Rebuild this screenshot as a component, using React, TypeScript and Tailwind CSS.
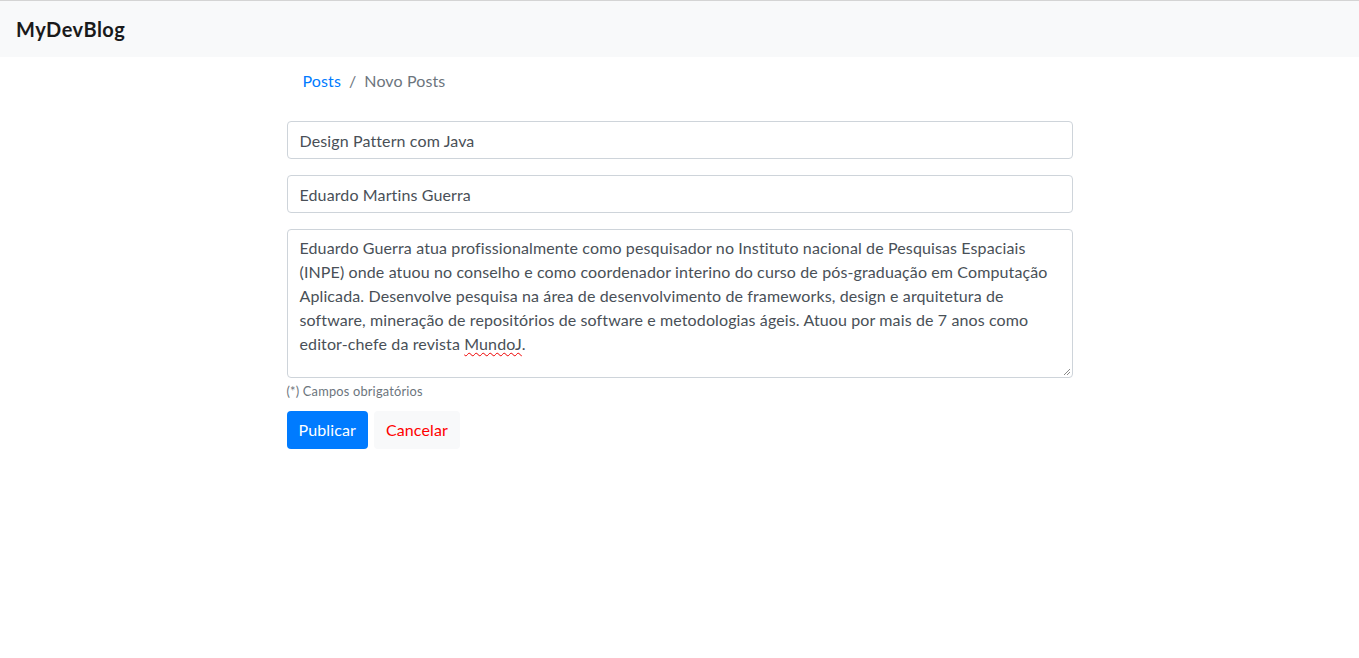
import React from 'react';

const font = { fontFamily: '"Lato", "Liberation Sans", sans-serif' };

function Field({ value }: { value: string }) {
  return (
    <div className="h-[38px] w-full rounded border border-[#ced4da] bg-white px-3 pt-[1px] flex items-center text-base text-[#495057]">
      {value}
    </div>
  );
}

export default function App() {
  return (
    <div className="min-h-screen bg-white tracking-[0.12px]" style={font}>
      {/* Navbar */}
      <header className="border-t border-[#d4d4d4] bg-[#f8f9fa] h-[57px] px-4 flex items-center">
        <span className="text-xl font-bold text-[#1a1a1a] leading-[30px] tracking-[0.5px]">MyDevBlog</span>
      </header>

      <main className="mx-auto w-[786px]">
        {/* Breadcrumb */}
        <nav className="flex items-center px-4 py-3 mb-4 text-base leading-6">
          <a href="#" className="text-[#007bff]">Posts</a>
          <span className="px-2 text-[#6c757d]">/</span>
          <span className="text-[#6c757d]">Novo Posts</span>
        </nav>

        <form className="flex flex-col">
          <Field value="Design Pattern com Java" />
          <div className="mt-4">
            <Field value="Eduardo Martins Guerra" />
          </div>

          <div className="relative mt-4 h-[149px] rounded border border-[#ced4da] px-3 py-[6px] text-base leading-6 text-[#495057]">
            <p className="whitespace-pre-line">
              {'Eduardo Guerra atua profissionalmente como pesquisador no Instituto nacional de Pesquisas Espaciais\n(INPE) onde atuou no conselho e como coordenador interino do curso de pós-graduação em Computação\nAplicada. Desenvolve pesquisa na área de desenvolvimento de frameworks, design e arquitetura de\nsoftware, mineração de repositórios de software e metodologias ágeis. Atuou por mais de 7 anos como'}
            </p>
            <p className="flex">
              <span className="whitespace-pre">editor-chefe da revista </span>
              <span className="underline decoration-wavy decoration-[#e00] decoration-1 underline-offset-2">MundoJ</span>
              <span>.</span>
            </p>
            <svg className="absolute right-[1px] bottom-[1px]" width="9" height="9" viewBox="0 0 9 9">
              <line x1="8" y1="2" x2="2" y2="8" stroke="#8a8a8a" strokeWidth="1" />
              <line x1="8" y1="5" x2="5" y2="8" stroke="#8a8a8a" strokeWidth="1" />
            </svg>
          </div>

          <small className="mt-1 text-[12.8px] leading-[19px] text-[#6c757d] tracking-[0.2px]">(*) Campos obrigatórios</small>

          <div className="mt-[10px] flex gap-[6px]">
            <button type="button" className="h-[38px] px-3 rounded bg-[#007bff] text-white text-base">
              Publicar
            </button>
            <button type="button" className="h-[38px] px-3 rounded bg-[#f8f9fa] text-[#ff0000] text-base">
              Cancelar
            </button>
          </div>
        </form>
      </main>
    </div>
  );
}
